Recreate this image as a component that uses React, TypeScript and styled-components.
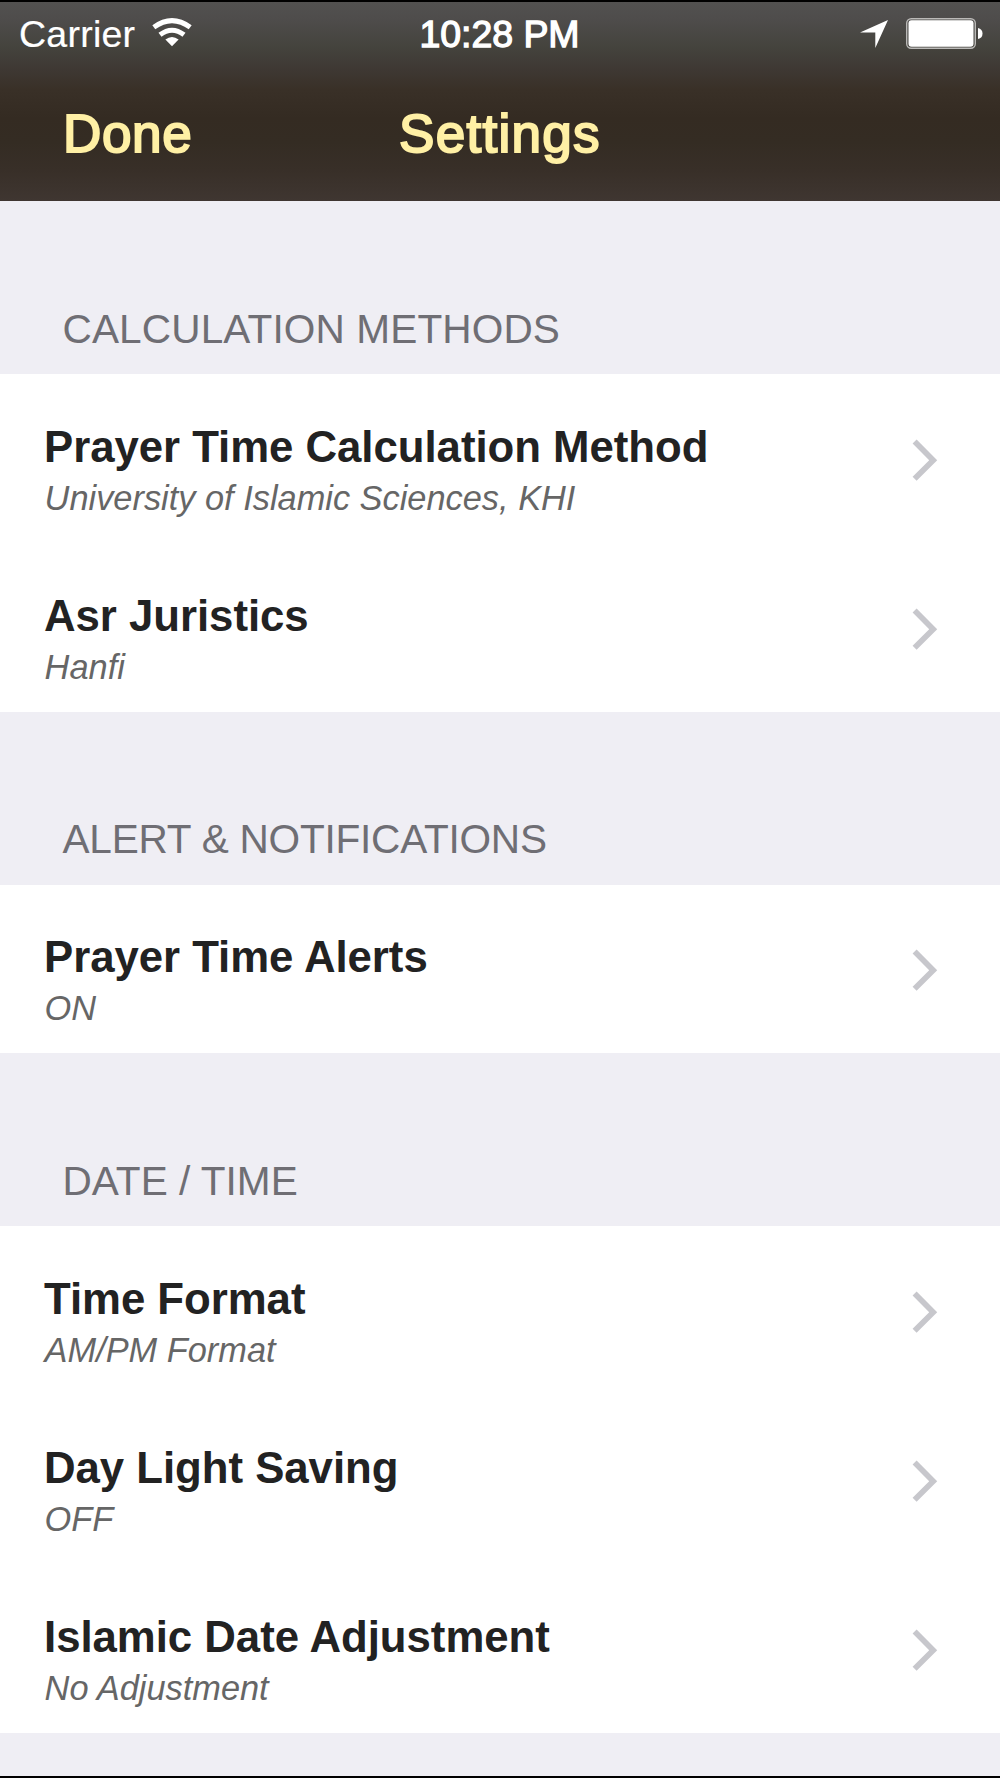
import React from "react";
import styled, { createGlobalStyle } from "styled-components";

const GlobalStyle = createGlobalStyle`
  * { box-sizing: border-box; }
  body { margin: 0; background: #efeef4; }
`;

const Screen = styled.div`
  width: 1000px;
  height: 1778px;
  display: flex;
  flex-direction: column;
  overflow: hidden;
  background: #efeef4;
  border-top: 2px solid #000;
  border-bottom: 2px solid #000;
  font-family: "Liberation Sans", Arial, sans-serif;
`;

const Header = styled.header`
  height: 199px;
  flex: none;
  background: linear-gradient(
    to bottom,
    #525150 0px,
    #4e4c4b 18px,
    #44433d 46px,
    #3e3833 68px,
    #393027 88px,
    #342b22 116px,
    #342c23 140px,
    #382f28 168px,
    #3f3631 199px
  );
`;

const StatusBar = styled.div`
  display: grid;
  grid-template-columns: 1fr auto 1fr;
  height: 64px;
  padding: 11px 17px 0 19px;
  color: #fff;
  font-size: 37.5px;
  line-height: 42px;
`;

const StatusGroup = styled.div<{ $end?: boolean }>`
  display: flex;
  justify-content: ${(p) => (p.$end ? "flex-end" : "flex-start")};
`;

const Carrier = styled.span`
  letter-spacing: 0.25px;
  -webkit-text-stroke: 0.2px #fff;
`;

const Clock = styled.span`
  margin-right: 3px;
  letter-spacing: -0.05px;
  -webkit-text-stroke: 1.3px #fff;
`;

const NavBar = styled.div`
  display: grid;
  grid-template-columns: 1fr auto 1fr;
  padding: 38px 63px 0;
  color: #fff0a5;
  font-size: 53.1px;
  line-height: 60px;
  -webkit-text-stroke: 2px #fff0a5;
`;

const DoneButton = styled.button`
  justify-self: start;
  padding: 0;
  border: 0;
  background: none;
  color: inherit;
  font: inherit;
  letter-spacing: 0.6px;
  -webkit-text-stroke: inherit;
`;

const Title = styled.h1`
  margin: 0;
  font: inherit;
  letter-spacing: 1.25px;
`;

const SectionTitle = styled.h2<{ $tracking: number }>`
  margin: 0;
  height: 173px;
  padding: 104.9px 0 0 62.5px;
  color: #6f6e74;
  font-weight: 400;
  font-size: 40.6px;
  line-height: 46px;
  letter-spacing: ${(p) => p.$tracking}px;
`;

const Row = styled.div`
  display: flex;
  justify-content: space-between;
  height: 168.75px;
  padding: 47.3px 62px 0 44px;
  background: #fff;
`;

const RowText = styled.div`
  padding-top: 0.7px;
`;

const RowTitle = styled.div`
  color: #222;
  font-weight: 700;
  font-size: 43.75px;
  line-height: 50px;
  letter-spacing: -0.03px;
`;

const RowValue = styled.div`
  padding-left: 0.6px;
  color: #666;
  font-style: italic;
  font-size: 34.375px;
  line-height: 52.6px;
`;

const Chevron = styled.svg`
  flex: none;
  margin-top: 17.7px;
`;

const IconSlot = styled.span<{ $left: number; $top: number }>`
  display: flex;
  align-items: flex-start;
  padding: ${(p) => p.$top}px 0 0 ${(p) => p.$left}px;
`;

const WifiIcon = () => (
  <svg width="40" height="30" viewBox="0 0 40 30">
    <path d="M1.8 9.3Q20 -4 38.2 9.3" fill="none" stroke="#fff" strokeWidth="5" />
    <path d="M8 16.8Q20 7.6 32 16.8" fill="none" stroke="#fff" strokeWidth="5" />
    <path d="M13.4 21.6Q20 16.2 26.6 21.6L20 28.2Z" fill="#fff" />
  </svg>
);

const LocationIcon = () => (
  <svg width="28" height="28" viewBox="0 0 28 28">
    <path d="M28 0L15.3 28V12.5H0Z" fill="#fff" />
  </svg>
);

const BatteryIcon = () => (
  <svg width="77" height="31" viewBox="0 0 77 31">
    <rect x="0.7" y="0.7" width="68.6" height="29.6" rx="4.5" fill="none" stroke="#bab9b7" strokeWidth="1.4" />
    <rect x="2.5" y="2.3" width="65" height="26.4" rx="3" fill="#fff" />
    <path d="M72 10Q76.5 11 76.5 15.5Q76.5 20 72 21Z" fill="#fff" />
  </svg>
);

const sections = [
  {
    title: "CALCULATION METHODS",
    tracking: 0.12,
    rows: [
      ["Prayer Time Calculation Method", "University of Islamic Sciences, KHI"],
      ["Asr Juristics", "Hanfi"],
    ],
  },
  {
    title: "ALERT & NOTIFICATIONS",
    tracking: -0.24,
    rows: [["Prayer Time Alerts", "ON"]],
  },
  {
    title: "DATE / TIME",
    tracking: 0,
    rows: [
      ["Time Format", "AM/PM Format"],
      ["Day Light Saving", "OFF"],
      ["Islamic Date Adjustment", "No Adjustment"],
    ],
  },
];

export default function App() {
  return (
    <Screen>
      <GlobalStyle />
      <Header>
        <StatusBar>
          <StatusGroup>
            <Carrier>Carrier</Carrier>
            <IconSlot $left={17} $top={5}>
              <WifiIcon />
            </IconSlot>
          </StatusGroup>
          <Clock>10:28 PM</Clock>
          <StatusGroup $end>
            <IconSlot $left={0} $top={7}>
              <LocationIcon />
            </IconSlot>
            <IconSlot $left={18} $top={5}>
              <BatteryIcon />
            </IconSlot>
          </StatusGroup>
        </StatusBar>
        <NavBar>
          <DoneButton>Done</DoneButton>
          <Title>Settings</Title>
        </NavBar>
      </Header>
      {sections.map((s) => (
        <section key={s.title}>
          <SectionTitle $tracking={s.tracking}>{s.title}</SectionTitle>
          {s.rows.map(([title, value]) => (
            <Row key={title}>
              <RowText>
                <RowTitle>{title}</RowTitle>
                <RowValue>{value}</RowValue>
              </RowText>
              <Chevron width="26" height="42" viewBox="0 0 26 42">
                <path d="M4.6 0.6L25.2 21.2L4.6 41.8L0.6 37.8L17.2 21.2L0.6 4.6Z" fill="#c7c7cc" />
              </Chevron>
            </Row>
          ))}
        </section>
      ))}
    </Screen>
  );
}
